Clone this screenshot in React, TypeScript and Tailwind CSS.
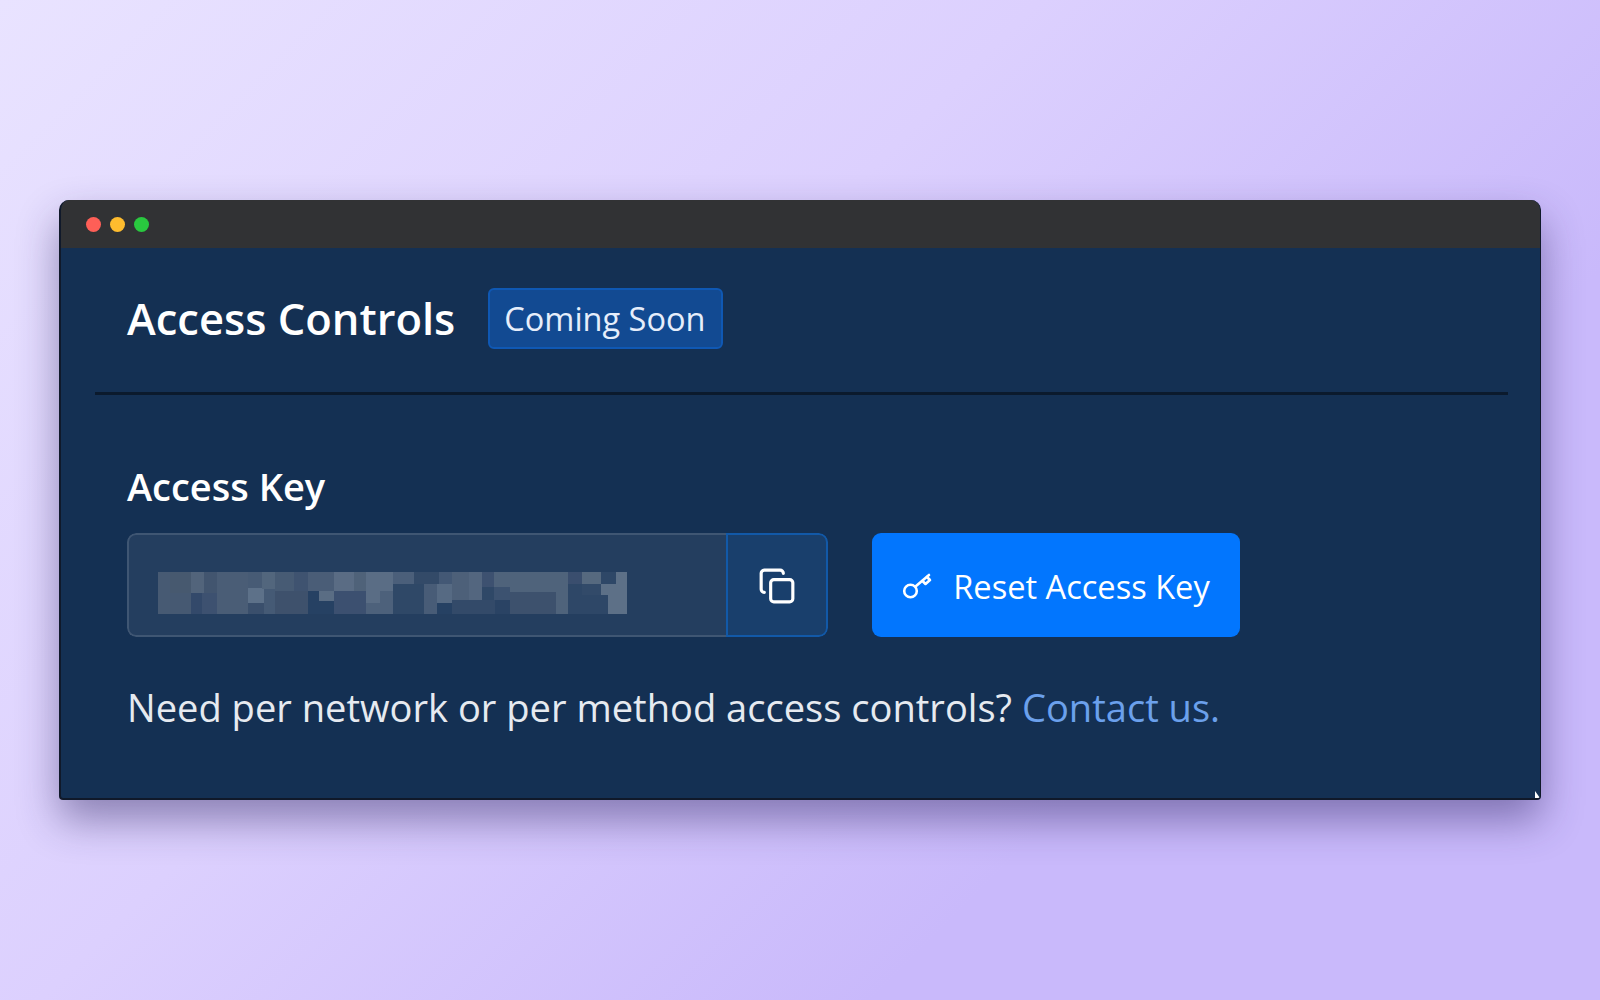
import { Copy } from 'lucide-react';

// pixelated access key, coordinates are in the zoomed crop so the blocks stay easy to tweak
const blocks: [number, number, number, number, string][] = [
  [135, 155, 170, 281, '#475a73'],
  [170, 155, 227, 218, '#47596f'],
  [170, 218, 227, 281, '#465972'],
  [227, 155, 265, 218, '#52647b'],
  [227, 218, 258, 281, '#33496a'],
  [258, 218, 300, 281, '#3d5170'],
  [265, 155, 300, 218, '#42556f'],
  [300, 155, 387, 281, '#4a5d76'],
  [387, 155, 425, 203, '#475b75'],
  [387, 203, 432, 248, '#5d7189'],
  [387, 248, 432, 281, '#3a4f6c'],
  [425, 155, 463, 205, '#52667d'],
  [432, 205, 463, 281, '#455a75'],
  [463, 155, 516, 212, '#475b74'],
  [516, 155, 554, 212, '#3f5370'],
  [463, 212, 554, 281, '#3e516c'],
  [554, 155, 627, 212, '#4a5d77'],
  [554, 212, 585, 281, '#264163'],
  [585, 212, 627, 243, '#5a6d84'],
  [585, 243, 627, 281, '#264163'],
  [627, 155, 684, 212, '#5a6c84'],
  [684, 155, 719, 212, '#4f6279'],
  [627, 212, 719, 281, '#3c5070'],
  [719, 155, 757, 248, '#5a6d85'],
  [757, 155, 793, 212, '#5a6d85'],
  [757, 212, 793, 281, '#4d617b'],
  [719, 248, 757, 281, '#4d617b'],
  [793, 155, 851, 191, '#4b5f7a'],
  [851, 155, 923, 191, '#334a68'],
  [793, 191, 881, 281, '#2f4867'],
  [881, 191, 916, 281, '#485c77'],
  [916, 191, 958, 248, '#566a83'],
  [916, 248, 958, 281, '#264163'],
  [923, 155, 958, 191, '#435875'],
  [958, 155, 1007, 239, '#4d6079'],
  [1007, 155, 1042, 239, '#53667f'],
  [958, 239, 1080, 281, '#334a69'],
  [1042, 155, 1075, 200, '#3d5170'],
  [1042, 200, 1075, 239, '#2f4867'],
  [1075, 200, 1122, 239, '#3c5270'],
  [1080, 239, 1122, 281, '#2a4364'],
  [1075, 155, 1285, 200, '#4f637b'],
  [1122, 200, 1285, 215, '#4f637b'],
  [1122, 215, 1250, 281, '#3d516d'],
  [1250, 215, 1285, 281, '#4f637b'],
  [1285, 155, 1323, 191, '#3a4e6e'],
  [1323, 155, 1377, 191, '#56697f'],
  [1377, 155, 1418, 191, '#2e4767'],
  [1418, 155, 1449, 281, '#5d7087'],
  [1285, 191, 1323, 281, '#2e4767'],
  [1323, 191, 1377, 224, '#324a69'],
  [1377, 191, 1418, 224, '#5d7087'],
  [1323, 224, 1395, 281, '#2e4767'],
  [1395, 224, 1418, 281, '#5d7087'],
];

function KeyIcon() {
  return (
    <svg width="32" height="32" viewBox="0 0 32 32" fill="none" stroke="white" strokeWidth="2.6" strokeLinecap="round" strokeLinejoin="round">
      <circle cx="8.5" cy="21" r="6.3" />
      <path d="M13.5 16.5 L27 5" />
      <path d="M20.5 11 L23.5 14 L28 10 L25 7" />
    </svg>
  );
}

export default function App() {
  return (
    <div className="h-[1000px] px-[59px] pt-[200px] bg-[linear-gradient(135deg,#e9e3ff_0%,#dcd0fe_40%,#c9b9fb_72%,#c9b9fb_100%)] font-['Open_Sans','Noto_Sans',sans-serif]">
      <div className="relative w-[1482px] rounded-t-[10px] rounded-b-[4px] overflow-hidden border-[2px] border-t-0 border-r border-[#10192a] bg-[#143053] shadow-[0_20px_40px_rgba(40,30,90,0.45)]">
        <div className="h-[48px] flex items-center gap-[9px] pl-[25px] bg-[#313234]">
          <span className="w-[15px] h-[15px] rounded-full bg-[#fe5f57]" />
          <span className="w-[15px] h-[15px] rounded-full bg-[#febc2e]" />
          <span className="w-[15px] h-[15px] rounded-full bg-[#29c83f]" />
        </div>

        <div className="h-[550px] pl-[34px] pr-[32px]">
          <div className="h-[147px] pb-[3px] flex items-center gap-[33px] pl-[32px] border-b-[3px] border-[#0b1a2d]">
            <h1 className="text-[43.5px] leading-none font-semibold text-white">Access Controls</h1>
            <span className="h-[61px] pl-[14px] pr-[16px] pt-[2px] flex items-center rounded-[6px] border-[2px] border-[#0f58b4] bg-[#124a92] text-[32.5px] text-[#e6eefb]">
              Coming Soon
            </span>
          </div>

          <div className="pl-[32px] pt-[67px]">
            <h2 className="text-[38px] leading-[48px] font-semibold text-white">Access Key</h2>
            <div className="mt-[23px] flex items-center gap-[44px]">
              <div className="w-[701px] h-[104px] flex rounded-[9px] overflow-hidden">
                <div className="flex-1 pl-[29px] pt-[37px] bg-[#243e5f] border-[2px] border-r-0 border-[#3f5673] rounded-l-[9px]">
                  <svg width="469" height="42" viewBox="135 155 1314 126" preserveAspectRatio="none" shapeRendering="crispEdges">
                    {blocks.map(([x1, y1, x2, y2, fill], i) => (
                      <rect key={i} x={x1} y={y1} width={x2 - x1} height={y2 - y1} fill={fill} />
                    ))}
                  </svg>
                </div>
                <button className="w-[102px] pt-[2px] flex items-center justify-center bg-[#193f6c] border-[2px] border-[#1259a8] rounded-r-[9px] text-white">
                  <Copy size={38} strokeWidth={2} />
                </button>
              </div>
              <button className="w-[368px] h-[104px] pt-[2px] flex items-center justify-center gap-[19px] rounded-[9px] bg-[#0276fe] text-[32.6px] text-white">
                <KeyIcon />
                <span className="pt-[3px]">Reset Access Key</span>
              </button>
            </div>
            <p className="mt-[46px] text-[38.1px] leading-[48px] text-[#e6eaf0]">
              Need per network or per method access controls? <a className="text-[#6ba0ec]">Contact us.</a>
            </p>
          </div>
        </div>
        <span className="absolute right-0 bottom-0 w-[5px] h-[7px] bg-white [clip-path:polygon(0_0,100%_100%,0_100%)]" />
      </div>
    </div>
  );
}
